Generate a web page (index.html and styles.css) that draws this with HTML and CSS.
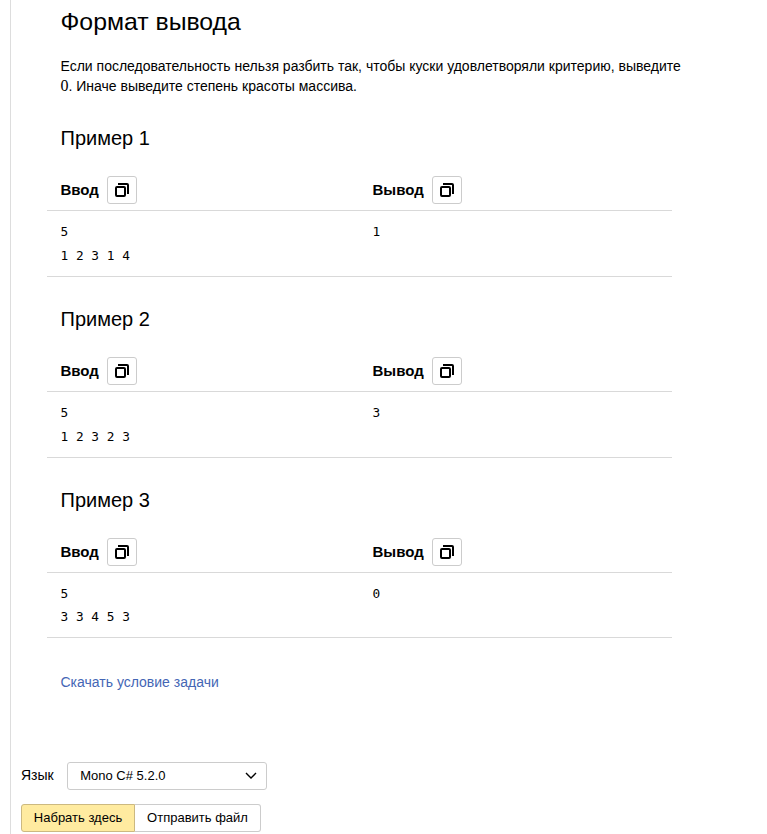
FILE: index.html
```html
<!DOCTYPE html>
<html lang="ru">
<head>
<meta charset="utf-8">
<title>Задача</title>
<link rel="stylesheet" href="styles.css">
</head>
<body>
<svg width="0" height="0" class="defs"><symbol id="copy" viewBox="0 0 16 16"><rect x="2" y="5" width="9" height="9" rx="1" fill="none" stroke="#000" stroke-width="2"/><path d="M4 2h9a1 1 0 0 1 1 1v9" fill="none" stroke="#000" stroke-width="2"/></symbol></svg>
<main class="page">
<section class="statement">
<h2>Формат вывода</h2>
<p class="legend">Если последовательность нельзя разбить так, чтобы куски удовлетворяли критерию, выведите <span class="math">0</span>. Иначе выведите степень красоты массива.</p>
<h3>Пример 1</h3>
<div class="sample">
<div class="head">Ввод<button><svg><use href="#copy"/></svg></button></div><div class="head">Вывод<button><svg><use href="#copy"/></svg></button></div>
<pre>5
1 2 3 1 4</pre><pre>1</pre>
</div>
<h3>Пример 2</h3>
<div class="sample">
<div class="head">Ввод<button><svg><use href="#copy"/></svg></button></div><div class="head">Вывод<button><svg><use href="#copy"/></svg></button></div>
<pre>5
1 2 3 2 3</pre><pre>3</pre>
</div>
<h3>Пример 3</h3>
<div class="sample last">
<div class="head">Ввод<button><svg><use href="#copy"/></svg></button></div><div class="head">Вывод<button><svg><use href="#copy"/></svg></button></div>
<pre>5
3 3 4 5 3</pre><pre>0</pre>
</div>
<a class="download">Скачать условие задачи</a>
</section>
<section class="submit">
<div class="language"><span class="label">Язык</span><div class="select"><span>Mono C# 5.2.0</span><svg width="12" height="8" viewBox="0 0 12 8"><path d="M1 1l5 5 5-5" fill="none" stroke="#000" stroke-width="1.4"/></svg></div></div>
<div class="tabs"><button class="active">Набрать здесь</button><button>Отправить файл</button></div>
</section>
</main>
</body>
</html>
```
FILE: styles.css
```css
* { box-sizing: border-box; }
body { margin: 0; background: #fff; color: #000; font: 14px/20px "Liberation Sans", Arial, sans-serif; overflow: hidden; }
.defs { display: none; }
.page { margin-left: 10px; border-left: 1px solid #ddd; height: 834px; }
.statement { height: 762px; padding: 7px 0 0 36px; }
h2, h3 { margin: 0; padding-left: 13.5px; font-weight: 400; }
h2 { font-size: 24.8px; line-height: 30px; }
.legend { margin: 19px 0 30px; padding-left: 13.5px; width: 645px; }
.math { font: 16px/16px "Liberation Serif", serif; }
h3 { font-size: 20px; line-height: 24px; }
.sample { width: 625px; display: grid; grid-template-columns: 312px 313px; grid-template-rows: 43px 66px; margin: 18px 0 30px; }
.sample.last { grid-template-rows: 43px 65px; }
.head { display: flex; gap: 8px; padding: 8px 14px 0 13.5px; border-bottom: 1px solid #d9d9d9; font-size: 15px; font-weight: 700; line-height: 28px; }
.head button { width: 30px; height: 28px; padding: 0; display: flex; align-items: center; justify-content: center; background: #fff; border: 1px solid #ccc; border-radius: 3px; }
.head svg { width: 16px; height: 16px; }
pre { margin: 0; padding: 9px 14px 0 13.5px; border-bottom: 1px solid #d9d9d9; font: 12.8px/24px "DejaVu Sans Mono", monospace; }
.last pre { line-height: 23.4px; }
.download { display: block; padding-left: 13.5px; margin-top: 34px; color: #4466b5; }
.submit { padding-left: 10px; }
.language { display: flex; align-items: center; gap: 13px; height: 28px; }
.label { padding-bottom: 2px; }
.select { width: 200px; height: 28px; padding: 0 9px 0 12.5px; border: 1px solid #ccc; border-radius: 3px; display: flex; align-items: center; justify-content: space-between; font-size: 13px; }
.tabs { display: flex; margin-top: 14px; }
.tabs button { height: 28px; width: 126px; padding: 0 0 2px; background: #fff; border: 1px solid #ccc; border-left: 0; border-radius: 0 3px 3px 0; font: 13px "Liberation Sans", Arial, sans-serif; }
.tabs .active { width: 114px; background: #ffeba0; border: 1px solid #ccb980; border-radius: 3px 0 0 3px; }
```
